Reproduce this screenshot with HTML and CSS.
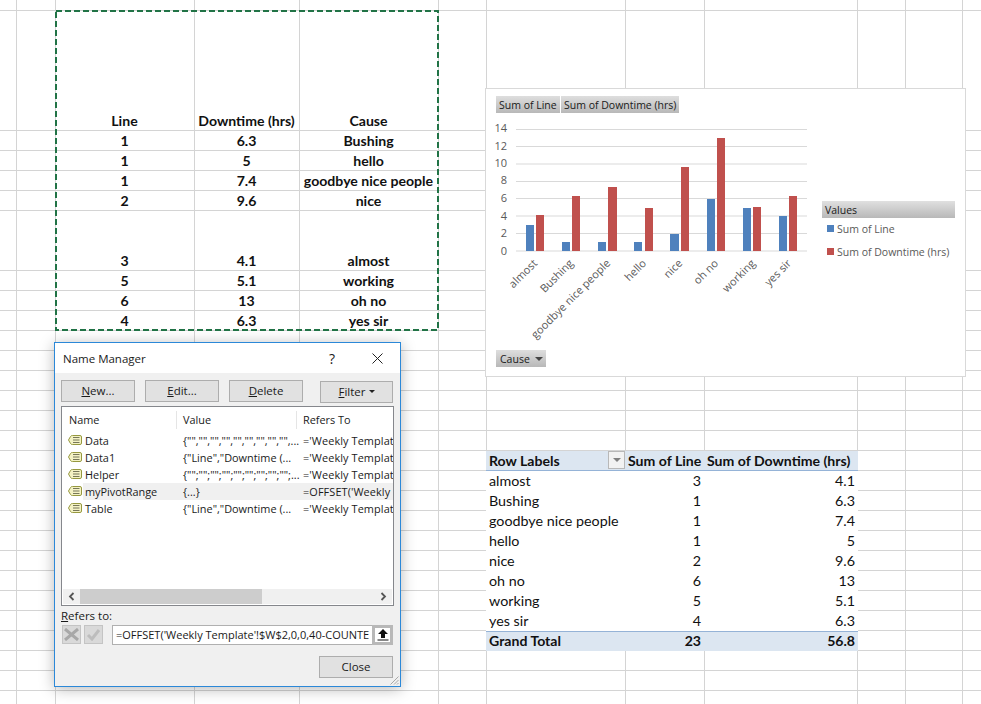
FILE: index.html
```html
<!DOCTYPE html>
<html lang="en">
<head>
<meta charset="utf-8">
<title>Name Manager</title>
<link rel="stylesheet" href="styles.css">
</head>
<body>
<svg class="defs" width="0" height="0" aria-hidden="true">
  <symbol id="tag" viewBox="0 0 14 10">
    <path class="tag-body" d="M.5 5 2.500 1.500Q3 .5 4.500 .5H12Q13.500 .5 13.500 2V8Q13.500 9.500 12 9.500H4.500Q3 9.500 2.500 8.500Z"/>
    <path class="tag-lines" d="M5 2.500H11.500M5 5H11.500M5 7.500H11.500"/>
  </symbol>
</svg>
<main class="sheet">
  <div class="col-left">
    <section class="source">
      <div class="source-grid">
        <div class="cell row-tall">Line</div><div class="cell row-tall">Downtime (hrs)</div><div class="cell row-tall">Cause</div>
        <div class="cell">1</div><div class="cell">6.3</div><div class="cell">Bushing</div>
        <div class="cell">1</div><div class="cell">5</div><div class="cell">hello</div>
        <div class="cell">1</div><div class="cell">7.4</div><div class="cell">goodbye nice people</div>
        <div class="cell">2</div><div class="cell">9.6</div><div class="cell">nice</div>
        <div class="cell row-gap">3</div><div class="cell row-gap">4.1</div><div class="cell row-gap">almost</div>
        <div class="cell">5</div><div class="cell">5.1</div><div class="cell">working</div>
        <div class="cell">6</div><div class="cell">13</div><div class="cell">oh no</div>
        <div class="cell">4</div><div class="cell">6.3</div><div class="cell">yes sir</div>
      </div>
      <svg class="ants" width="385" height="322" viewBox="0 0 385 322" aria-hidden="true">
        <rect x="1" y="1" width="382" height="319"/>
      </svg>
    </section>

    <section class="dialog">
      <header class="titlebar">
        <span class="title">Name Manager</span>
        <span class="help">?</span>
        <svg class="close-x" width="11" height="11" viewBox="0 0 11 11" aria-hidden="true"><path d="M.5 .5 10.500 10.500M10.500 .5 .5 10.500"/></svg>
      </header>
      <div class="dialog-body">
        <div class="toolbar">
          <button class="btn"><u>N</u>ew...</button>
          <button class="btn"><u>E</u>dit...</button>
          <button class="btn"><u>D</u>elete</button>
          <button class="btn btn-filter"><u>F</u>ilter<i class="caret"></i></button>
        </div>
        <div class="list">
          <div class="list-head">
            <span class="c-name">Name</span><span class="c-value">Value</span><span class="c-ref">Refers To</span>
          </div>
          <div class="list-row"><svg class="tag"><use href="#tag"/></svg><span class="c-label">Data</span><span class="c-value">{"","","","","","","","","",...</span><span class="c-ref">='Weekly Templat</span></div>
          <div class="list-row"><svg class="tag"><use href="#tag"/></svg><span class="c-label">Data1</span><span class="c-value">{"Line","Downtime (...</span><span class="c-ref">='Weekly Templat</span></div>
          <div class="list-row"><svg class="tag"><use href="#tag"/></svg><span class="c-label">Helper</span><span class="c-value">{"";"";"";"";"";"";"";"";"";...</span><span class="c-ref">='Weekly Templat</span></div>
          <div class="list-row is-dynamic"><svg class="tag"><use href="#tag"/></svg><span class="c-label">myPivotRange</span><span class="c-value">{...}</span><span class="c-ref">=OFFSET('Weekly</span></div>
          <div class="list-row"><svg class="tag"><use href="#tag"/></svg><span class="c-label">Table</span><span class="c-value">{"Line","Downtime (...</span><span class="c-ref">='Weekly Templat</span></div>
          <div class="list-fill"></div>
          <div class="hscroll">
            <svg class="arrow" width="7" height="9" viewBox="0 0 7 9" aria-hidden="true"><path d="M5.5 1 2 4.5 5.5 8"/></svg>
            <div class="track"><div class="thumb"></div></div>
            <svg class="arrow" width="7" height="9" viewBox="0 0 7 9" aria-hidden="true"><path d="M1.5 1 5 4.5 1.5 8"/></svg>
          </div>
        </div>
        <div class="refers-label"><u>R</u>efers to:</div>
        <div class="refers-row">
          <span class="mini"><svg width="15" height="13" viewBox="0 0 15 13" aria-hidden="true"><path class="mini-x" d="M1 1 14 12M14 1 1 12"/></svg></span>
          <span class="mini"><svg width="15" height="13" viewBox="0 0 15 13" aria-hidden="true"><path class="mini-check" d="M2 7 6 11 13 2"/></svg></span>
          <div class="refers-input">=OFFSET('Weekly Template'!$W$2,0,0,40-COUNTE</div>
          <span class="collapse"><svg width="12" height="12" viewBox="0 0 12 12" aria-hidden="true"><path d="M6 0 11 5H8V9H4V5H1ZM.5 10.500H11.500V11.500H.5Z"/></svg></span>
        </div>
        <div class="footer"><button class="btn">Close</button></div>
      </div>
      <svg class="grip" width="10" height="10" viewBox="0 0 10 10" aria-hidden="true"><path d="M9.500 1.500 1.500 9.500M9.500 5 5 9.500M9.500 8 8 9.500"/></svg>
    </section>
  </div>

  <div class="col-right">
    <section class="chart">
      <div class="field-row">
        <span class="field">Sum of Line</span>
        <span class="field">Sum of Downtime (hrs)</span>
      </div>
      <svg class="plot" width="479" height="287" viewBox="486 89 479 287" aria-label="Clustered column chart">
        <g class="grid-lines">
          <path d="M516 129.500H807M516 146.500H807M516 164H807M516 181.500H807M516 198.500H807M516 216H807M516 233.500H807M516 251H807"/>
        </g>
        <g class="y-labels">
          <text x="507" y="132">14</text><text x="507" y="149.500">12</text><text x="507" y="167">10</text>
          <text x="507" y="184">8</text><text x="507" y="202">6</text><text x="507" y="219.500">4</text>
          <text x="507" y="237">2</text><text x="507" y="254.500">0</text>
        </g>
        <g class="bars-a">
          <rect x="526" y="225" width="8" height="26"/><rect x="562" y="242" width="8" height="9"/>
          <rect x="598" y="242" width="8" height="9"/><rect x="634" y="242" width="8" height="9"/>
          <rect x="670" y="234" width="9" height="17"/><rect x="707" y="199" width="8" height="52"/>
          <rect x="743" y="208" width="8" height="43"/><rect x="779" y="216" width="8" height="35"/>
        </g>
        <g class="bars-b">
          <rect x="536" y="215" width="8" height="36"/><rect x="572" y="196" width="8" height="55"/>
          <rect x="608" y="187" width="9" height="64"/><rect x="645" y="208" width="8" height="43"/>
          <rect x="681" y="167" width="8" height="84"/><rect x="717" y="138" width="8" height="113"/>
          <rect x="753" y="207" width="8" height="44"/><rect x="789" y="196" width="8" height="55"/>
        </g>
        <g class="x-labels">
          <text transform="translate(538 264) rotate(-45)">almost</text>
          <text transform="translate(574 264) rotate(-45)">Bushing</text>
          <text transform="translate(611 264) rotate(-45)">goodbye nice people</text>
          <text transform="translate(647 264) rotate(-45)">hello</text>
          <text transform="translate(683 264) rotate(-45)">nice</text>
          <text transform="translate(719 264) rotate(-45)">oh no</text>
          <text transform="translate(756 264) rotate(-45)">working</text>
          <text transform="translate(792 264) rotate(-45)">yes sir</text>
        </g>
      </svg>
      <aside class="legend">
        <div class="legend-head">Values</div>
        <div class="legend-item"><i class="swatch swatch-a"></i>Sum of Line</div>
        <div class="legend-item"><i class="swatch swatch-b"></i>Sum of Downtime (hrs)</div>
      </aside>
      <span class="field field-cause">Cause<i class="caret caret-dark"></i></span>
    </section>

    <section class="pivot">
      <div class="p-row p-head">
        <div class="p-cell p-label">Row Labels<span class="p-filter"><i class="caret caret-grey"></i></span></div>
        <div class="p-cell p-label">Sum of Line</div>
        <div class="p-cell p-label">Sum of Downtime (hrs)</div>
      </div>
      <div class="p-row"><div class="p-cell p-label">almost</div><div class="p-cell">3</div><div class="p-cell">4.1</div></div>
      <div class="p-row"><div class="p-cell p-label">Bushing</div><div class="p-cell">1</div><div class="p-cell">6.3</div></div>
      <div class="p-row"><div class="p-cell p-label">goodbye nice people</div><div class="p-cell">1</div><div class="p-cell">7.4</div></div>
      <div class="p-row"><div class="p-cell p-label">hello</div><div class="p-cell">1</div><div class="p-cell">5</div></div>
      <div class="p-row"><div class="p-cell p-label">nice</div><div class="p-cell">2</div><div class="p-cell">9.6</div></div>
      <div class="p-row"><div class="p-cell p-label">oh no</div><div class="p-cell">6</div><div class="p-cell">13</div></div>
      <div class="p-row"><div class="p-cell p-label">working</div><div class="p-cell">5</div><div class="p-cell">5.1</div></div>
      <div class="p-row"><div class="p-cell p-label">yes sir</div><div class="p-cell">4</div><div class="p-cell">6.3</div></div>
      <div class="p-row p-total"><div class="p-cell p-label">Grand Total</div><div class="p-cell">23</div><div class="p-cell">56.8</div></div>
    </section>
  </div>
</main>
</body>
</html>
```
FILE: styles.css
```css
* { box-sizing: border-box; }
html, body { margin: 0; padding: 0; background: #fff; }
body { width: 981px; height: 704px; overflow: hidden; }
.defs { position: absolute; }

/* worksheet: the cell grid is painted behind the objects */
.sheet {
  --g: #d4d4d4;
  width: 981px;
  height: 704px;
  display: grid;
  grid-template-columns: 485px 496px;
  overflow: hidden;
  font-family: Lato, "Open Sans", sans-serif;
  background-color: #fff;
  background-repeat: no-repeat;
  background-image:
    linear-gradient(var(--g), var(--g)), linear-gradient(var(--g), var(--g)), linear-gradient(var(--g), var(--g)),
    linear-gradient(var(--g), var(--g)), linear-gradient(var(--g), var(--g)), linear-gradient(var(--g), var(--g)),
    linear-gradient(var(--g), var(--g)), linear-gradient(var(--g), var(--g)), linear-gradient(var(--g), var(--g)),
    linear-gradient(var(--g), var(--g)), linear-gradient(var(--g), var(--g)),
    linear-gradient(var(--g), var(--g)),
    repeating-linear-gradient(to bottom, var(--g) 0 1px, transparent 1px 20px),
    repeating-linear-gradient(to bottom, var(--g) 0 1px, transparent 1px 20px);
  background-size:
    1px 100%, 1px 100%, 1px 100%, 1px 100%, 1px 100%, 1px 100%,
    1px 100%, 1px 100%, 1px 100%, 1px 100%, 1px 100%,
    100% 1px, 100% 81px, 100% 434px;
  background-position:
    16px 0, 55px 0, 194px 0, 299px 0, 438px 0, 486px 0,
    625px 0, 704px 0, 857px 0, 905px 0, 962px 0,
    0 10px, 0 130px, 0 270px;
}

.col-left { padding: 10px 0 0 55px; display: flex; flex-direction: column; align-items: flex-start; }
.col-right { padding: 88px 0 0 0; display: flex; flex-direction: column; align-items: flex-start; }

/* copied source range */
.source { position: relative; width: 384px; height: 321px; flex: none; }
.source-grid {
  display: grid;
  grid-template-columns: 139px 105px 139px;
  grid-template-rows: 120px repeat(4, 20px) 60px repeat(3, 20px);
  font-weight: 700;
  font-size: 14.100px;
  color: #111;
}
.cell { display: flex; align-items: flex-end; justify-content: center; height: 100%; line-height: 19px; white-space: nowrap; }
.ants { position: absolute; left: 0; top: 0; }
.ants rect { fill: none; stroke: #217346; stroke-width: 2; stroke-dasharray: 6 3; }

/* Name Manager dialog */
.dialog {
  position: relative;
  margin-top: 11px;
  margin-left: -1px;
  width: 347px;
  height: 345px;
  flex: none;
  border: 1px solid #2b88d8;
  background: #f0f0f0;
  box-shadow: 0 2px 14px rgba(0, 0, 0, .28);
  font-family: "Open Sans", "Noto Sans", sans-serif;
  font-size: 10.900px;
  color: #1a1a1a;
  display: flex;
  flex-direction: column;
}
.titlebar { height: 30px; flex: none; background: #fff; display: flex; align-items: center; padding: 0 17px 0 8px; }
.title { font-size: 11.500px; flex: 1; }
.help { font-size: 14px; margin-right: 37px; }
.close-x path { stroke: #222; stroke-width: 1; fill: none; }
.dialog-body { padding: 7px 6px 0 6px; flex: 1; display: flex; flex-direction: column; }
.toolbar { display: flex; gap: 10px; height: 26px; }
.btn {
  width: 74px; height: 22px;
  padding: 0 0 1px;
  border: 1px solid #adadad;
  background: #e1e1e1;
  font: inherit;
  font-size: 11.500px;
  color: inherit;
  display: flex; align-items: center; justify-content: center;
}
.btn-filter { margin-left: 7px; margin-top: 1px; width: 73px; }
.caret { display: inline-block; width: 0; height: 0; border: 3px solid transparent; border-top: 3px solid #222; border-bottom: 0; margin-left: 3px; }

.list { width: 333px; height: 200px; flex: none; border: 1px solid #85878c; background: #fff; display: flex; flex-direction: column; overflow: hidden; }
.list-head { height: 25px; flex: none; display: flex; align-items: center; }
.list-head .c-name { width: 115px; padding-left: 7px; height: 18px; line-height: 18px; border-right: 1px solid #e5e5e5; }
.list-head .c-value { width: 120px; padding-left: 6px; height: 18px; line-height: 18px; border-right: 1px solid #e5e5e5; }
.list-head .c-ref { padding-left: 6px; }
.list-row { height: 17px; flex: none; display: flex; align-items: center; white-space: nowrap; }
.list-row .tag { width: 14px; height: 10px; flex: none; margin: -2px 1px 0 6px; }
.tag-body { fill: #f4f2c4; stroke: #96983f; stroke-width: 1; }
.tag-lines { stroke: #77775a; stroke-width: 1; fill: none; }
.is-dynamic .tag-body { fill: #a9d3d8; stroke: #5e8f80; }
.c-label { width: 94px; flex: none; padding-left: 2px; height: 17px; line-height: 17px; }
.c-value { width: 120px; flex: none; padding-left: 6px; }
.c-ref { flex: none; padding-left: 6px; letter-spacing: .1px; }
.list-head .c-ref, .list-head .c-value { letter-spacing: 0; }
.is-dynamic .c-label, .is-dynamic .c-value, .is-dynamic .c-ref { background: #f0f0f0; height: 17px; line-height: 17px; }
.is-dynamic .c-ref { flex: 1; }
.list-fill { flex: 1; }
.hscroll { height: 15px; flex: none; background: #f0f0f0; display: flex; align-items: center; padding: 0 5px; margin: 0 1px 1px; }
.arrow path { fill: none; stroke: #555; stroke-width: 1.800; }
.track { flex: 1; height: 100%; margin: 0 5px; }
.thumb { width: 182px; height: 100%; background: #cdcdcd; }

.refers-label { height: 19px; line-height: 20px; flex: none; font-size: 11.500px; }
.refers-row { height: 20px; flex: none; display: flex; align-items: stretch; }
.mini { width: 19px; height: 19px; margin: 0 2px 0 1px; background: #d9d9d9; border: 1px solid #c4c4c4; display: flex; align-items: center; justify-content: center; }
.mini-x { stroke: #a8a8a8; stroke-width: 3; fill: none; }
.mini-check { stroke: #bdbdbd; stroke-width: 3; fill: none; }
.refers-input {
  margin-left: 7px;
  width: 260px; height: 20px;
  border: 1px solid #b0b0b0; border-right: 0;
  background: #fff;
  padding: 0 0 0 3px;
  white-space: nowrap;
  line-height: 18px;
  font-size: 11px;
}
.collapse { width: 21px; height: 20px; border: 3px solid #b8b8b8; background: #fff; display: flex; align-items: center; justify-content: center; }
.collapse path { fill: #111; }
.footer { display: flex; justify-content: flex-end; margin-top: 11px; padding-right: 1px; }
.grip { position: absolute; right: 1px; bottom: 1px; }
.grip path { stroke: #a8a8a8; stroke-width: 1; fill: none; }

/* pivot chart */
.chart {
  position: relative;
  width: 481px;
  height: 289px;
  flex: none;
  background: #fff;
  border: 1px solid #d9d9d9;
  font-family: "Open Sans", "Noto Sans", sans-serif;
  font-size: 10.500px;
  color: #1a1a1a;
}
.field-row { position: absolute; left: 10px; top: 7px; display: flex; gap: 1px; }
.field { height: 17px; line-height: 19px; padding: 0 4px; background: linear-gradient(#dedede, #b8b8b8); white-space: nowrap; display: inline-block; }
.field-row .field:first-child { width: 64px; padding: 0 3px; }
.field-row .field:last-child { width: 118px; padding: 0 3px; }
.field-cause { position: absolute; left: 10px; top: 261px; width: 50px; }
.plot { display: block; }
.grid-lines path { stroke: #d9d9d9; stroke-width: 1; fill: none; }
.y-labels text { text-anchor: end; fill: #595959; font-size: 11px; }
.x-labels text { text-anchor: end; fill: #595959; font-size: 11px; }
.bars-a rect { fill: #4f81bd; }
.bars-b rect { fill: #c0504d; }
.legend { position: absolute; left: 336px; top: 112px; width: 133px; color: #595959; }
.legend-head { height: 17px; line-height: 19px; padding-left: 3px; color: #1a1a1a; background: linear-gradient(#e0e0e0, #b8b8b8); margin-bottom: -1px; }
.legend-item { display: flex; align-items: center; height: 23px; padding-left: 5px; white-space: nowrap; }
.swatch { width: 7px; height: 7px; margin-right: 3px; flex: none; }
.swatch-a { background: #4f81bd; }
.swatch-b { background: #c0504d; }
.caret-dark { margin-left: 5px; vertical-align: 2px; border-top-color: #444; border-width: 4px 4px 0; }

/* pivot table */
.pivot { width: 372px; margin-top: 74px; margin-left: 1px; flex: none; background: #fff; font-size: 14.300px; color: #111; }
.p-row { display: grid; grid-template-columns: 139px 79px 154px; height: 20px; }
.p-head { background: #dce6f1; border-bottom: 1px solid #95b3d7; font-weight: 700; font-size: 14.100px; }
.p-total { background: #dce6f1; border-top: 1px solid #95b3d7; font-weight: 700; font-size: 14.100px; }
.p-total .p-cell { line-height: 18px; }
.p-cell { text-align: right; padding: 0 3px; line-height: 20px; white-space: nowrap; position: relative; }
.p-label { text-align: left; }
.p-filter { position: absolute; right: 0; top: 0; width: 17px; height: 18px; background: #f2f2f2; border: 1px solid #b8b8b8; display: flex; align-items: center; justify-content: center; }
.caret-grey { border-width: 4px 4px 0; border-top-color: #808080; margin: 0; }
```
